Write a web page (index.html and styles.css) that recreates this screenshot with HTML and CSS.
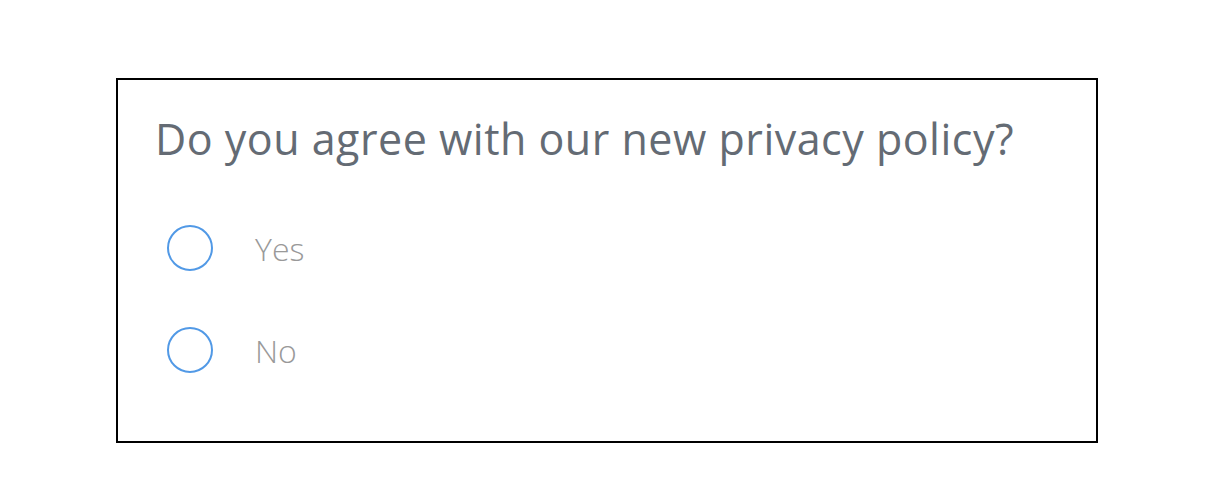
FILE: index.html
```html
<!DOCTYPE html>
<html>
<head>
	<title>Privacy poll</title>
	<meta charset="utf-8">
	<link rel="stylesheet" href="styles.css">
</head>
<body>
<div class="poll">
	<h1 class="question">Do you agree with our new privacy policy?</h1>
	<ul class="options">
		<li><span class="radio"></span><span class="label">Yes</span></li>
		<li><span class="radio"></span><span class="label">No</span></li>
	</ul>
</div>
</body>
</html>
```

FILE: styles.css
```css
*{
	margin: 0;
	padding: 0;
}
body{
	background: #fff;
	font-family: "Open Sans", "Noto Sans", sans-serif;
}
.poll{
	width: 941px;
	height: 331px;
	margin: 78px 0 0 116px;
	border: 2px solid #000;
	padding: 30px 0 0 37px;
}
.question{
	font-weight: 400;
	font-size: 43px;
	color: #646b74;
	line-height: 58px;
	letter-spacing: 0.5px;
}
.options{
	margin-top: 57px;
}
.options li{
	list-style: none;
	display: flex;
	align-items: center;
	height: 46px;
	margin-bottom: 56px;
}
.radio{
	width: 42px;
	height: 42px;
	border: 2px solid #5199e6;
	border-radius: 50%;
	margin-left: 12px;
}
.label{
	margin-left: 42px;
	font-size: 32px;
	font-weight: 300;
	color: #999;
}
```
